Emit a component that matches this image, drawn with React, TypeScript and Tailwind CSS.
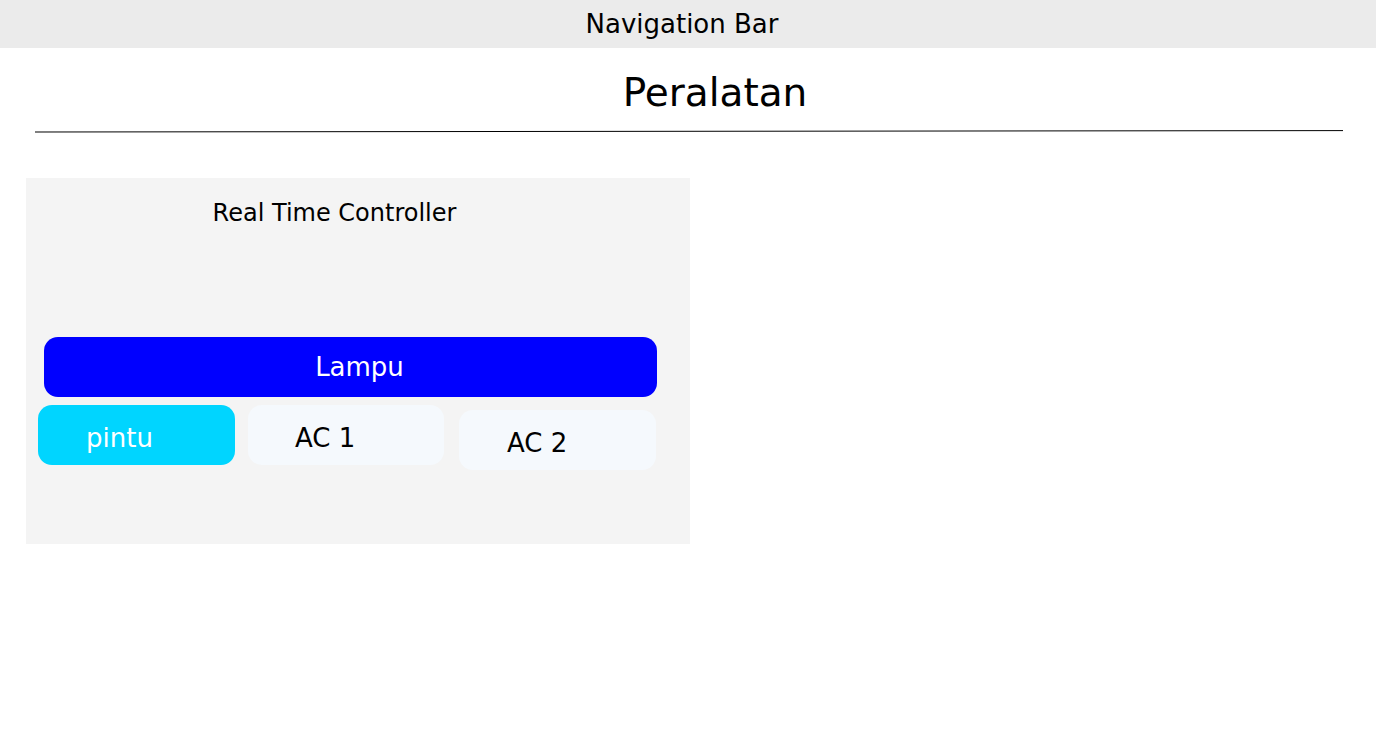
import React from "react";

const font = { fontFamily: '"DejaVu Sans", Verdana, sans-serif' };

export default function App() {
  return (
    <div className="min-h-[745px] w-full bg-white text-black" style={font}>
      <div className="flex h-12 items-center justify-center bg-[#ebebeb] pr-[12px] text-[26px] leading-[30px]">
        Navigation Bar
      </div>
      <h1 className="mt-[22px] pl-[54px] text-center text-[39px] font-normal leading-[46px]">
        Peralatan
      </h1>
      <svg className="mt-[14px] block" width="100%" height="3">
        <line x1="35" y1="2" x2="1343" y2="0.6" stroke="#000" strokeWidth="1" />
      </svg>
      <div className="ml-[26px] mt-[45px] h-[366px] w-[664px] bg-[#f4f4f4] pt-[21px]">
        <div className="pr-[47px] text-center text-[24px] leading-[28px]">Real Time Controller</div>
        <button className="ml-[18px] mt-[110px] flex h-[60px] w-[613px] items-center justify-center rounded-[14px] bg-[#0000ff] pl-[18px] text-[26px] leading-[30px] text-white">
          Lampu
        </button>
        <div className="mt-2 flex items-start">
          <button className="ml-[12px] flex h-[60px] w-[197px] items-center rounded-[14px] bg-[#00d5ff] pl-[48px] pt-[6px] text-[26px] leading-[30px] text-white">
            pintu
          </button>
          <button className="ml-[13px] flex h-[60px] w-[196px] items-center rounded-[14px] bg-[#f5f9fd] pl-[47px] pt-[6px] text-[26px] leading-[30px] text-black">
            AC 1
          </button>
          <button className="ml-[15px] mt-[5px] flex h-[60px] w-[197px] items-center rounded-[14px] bg-[#f5f9fd] pl-[48px] pt-[6px] text-[26px] leading-[30px] text-black">
            AC 2
          </button>
        </div>
      </div>
    </div>
  );
}
